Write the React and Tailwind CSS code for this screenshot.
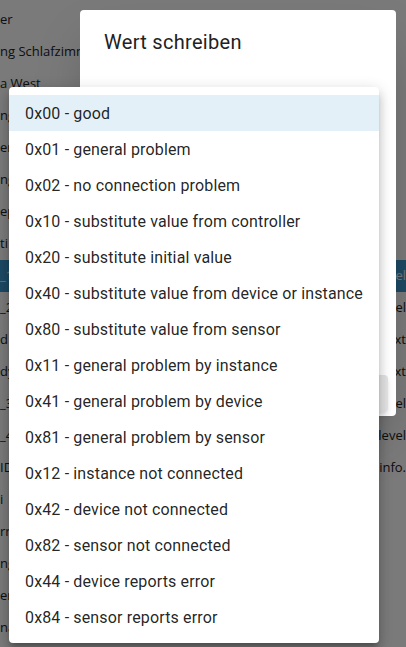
import React from 'react';

const rows = [
  { left: 'er', right: '' },
  { left: 'ng Schlafzimmer', right: '' },
  { left: 'a West', right: '' },
  { left: 'ng', right: '' },
  { left: 'er', right: '' },
  { left: 'ng', right: '' },
  { left: 'ep', right: '' },
  { left: 'ti', right: '' },
  { left: '_1', right: 'level', active: true },
  { left: '_2', right: 'level' },
  { left: 'd', right: 'Text' },
  { left: 'dy', right: 'Text' },
  { left: '_3', right: 'level' },
  { left: '_4', right: 'level' },
  { left: 'ID', right: 'info.' },
  { left: 'i', right: '' },
  { left: 'rr', right: '' },
  { left: 'ng', right: '' },
  { left: 'er', right: '' },
  { left: 'na', right: '' },
];

const options = [
  '0x00 - good',
  '0x01 - general problem',
  '0x02 - no connection problem',
  '0x10 - substitute value from controller',
  '0x20 - substitute initial value',
  '0x40 - substitute value from device or instance',
  '0x80 - substitute value from sensor',
  '0x11 - general problem by instance',
  '0x41 - general problem by device',
  '0x81 - general problem by sensor',
  '0x12 - instance not connected',
  '0x42 - device not connected',
  '0x82 - sensor not connected',
  '0x44 - device reports error',
  '0x84 - sensor reports error',
];

export default function App() {
  return (
    <div className="relative w-[406px] h-[647px] overflow-hidden bg-white">
      {/* Table behind the dialog */}
      <div className="flex flex-col pt-1 font-['Open_Sans',sans-serif] text-[13px] text-[#222]">
        {rows.map((row, i) => (
          <div
            key={i}
            className={`flex items-center h-8 ${row.active ? 'bg-[#3e9acf] text-[#f4faff]' : ''}`}
          >
            <span className="w-[382px] whitespace-nowrap overflow-hidden">{row.left}</span>
            <span className="whitespace-nowrap">{row.right}</span>
          </div>
        ))}
      </div>

      {/* Backdrop */}
      <div className="absolute inset-0 bg-black/[0.52]" />

      {/* Dialog */}
      <div className="absolute left-[80px] top-[10px] w-[316px] h-[406px] bg-white rounded-[4px] shadow-2xl flex flex-col font-['Roboto',sans-serif]">
        <h2 className="px-6 py-4 text-[20px] leading-8 font-normal tracking-[0.3px] text-[#222]">Wert schreiben</h2>
        <div className="flex-1 flex flex-col justify-end pb-[4px] pr-2 pl-6">
          <div className="h-[37px] bg-[#e4e4e4] rounded-[4px] shadow-md" />
        </div>
      </div>

      {/* Select menu */}
      <ul className="absolute left-[9px] top-[87px] w-[370px] py-2 bg-white rounded-[4px] shadow-[0_5px_5px_-3px_rgba(0,0,0,0.2),0_8px_10px_1px_rgba(0,0,0,0.14),0_3px_14px_2px_rgba(0,0,0,0.12)] font-['Roboto',sans-serif]">
        {options.map((opt, i) => (
          <li
            key={opt}
            className={`flex items-center h-9 pt-[2px] px-4 text-[16px] tracking-[0.15px] text-black/[0.87] whitespace-nowrap ${i === 0 ? 'bg-[#e3f0f7]' : ''}`}
          >
            {opt}
          </li>
        ))}
      </ul>
    </div>
  );
}
